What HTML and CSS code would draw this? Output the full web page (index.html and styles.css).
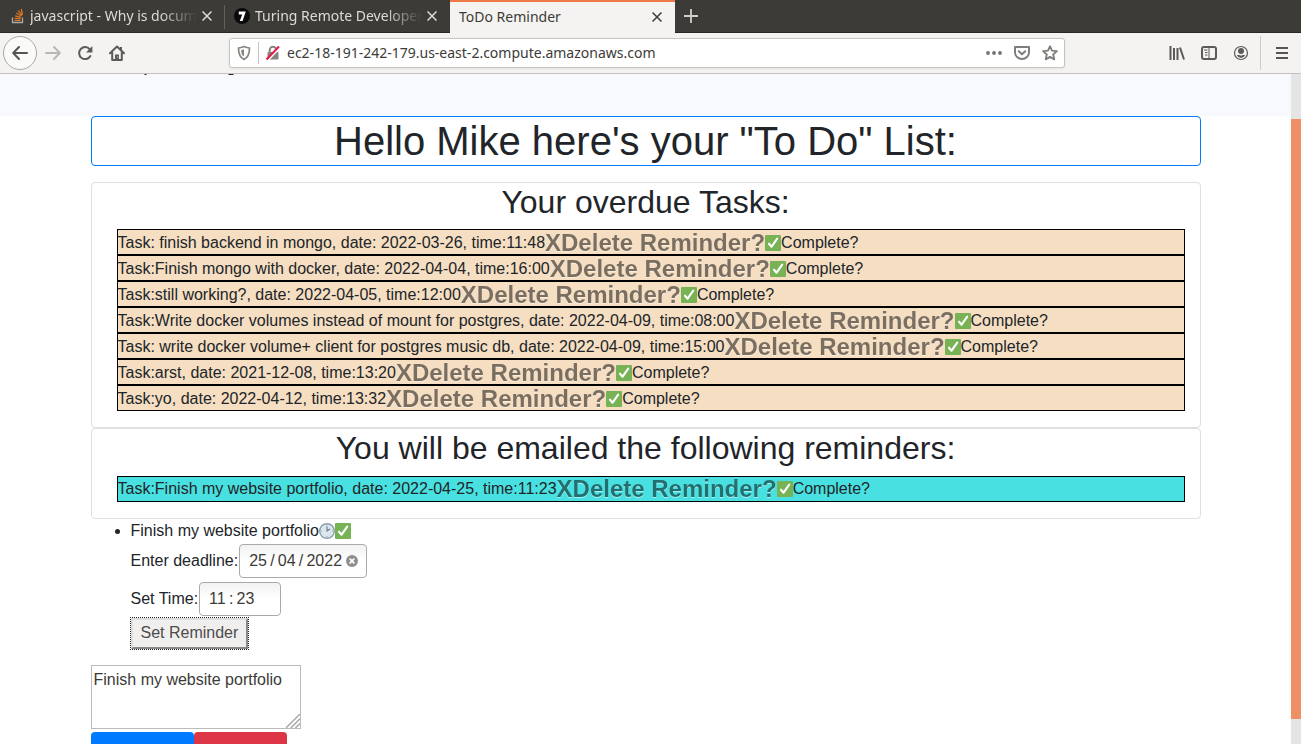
FILE: index.html
```html
<!DOCTYPE html>
<html lang="en">
<head>
<meta charset="utf-8">
<title>ToDo Reminder</title>
<link rel="stylesheet" href="styles.css">
</head>
<body>
<svg class="sprite" aria-hidden="true">
  <symbol id="check" viewBox="0 0 16 16"><rect width="16" height="16" rx="1" fill="#77b255"/><path d="M4 8.700l2.600 3L12.200 3.600" fill="none" stroke="#fff" stroke-width="2.100" stroke-linecap="round" stroke-linejoin="round"/></symbol>
  <symbol id="close" viewBox="0 0 10 10"><path d="M.5.5l9 9M9.500.5l-9 9" fill="none" stroke="currentColor" stroke-width="1.500"/></symbol>
</svg>
<div class="browser">
  <div class="tabs">
    <div class="tab">
      <svg class="favicon" viewBox="0 0 16 16"><path d="M3.500 9.500v5h10v-5" fill="none" stroke="#a9aaa9" stroke-width="1.300"/><path d="M5.500 12.500h6M5.600 10.300l6 .6M6.100 7.800l5.700 1.600M7.300 5l5 3M9.400 2.600l3.600 4.700M12.200 1l1.400 5.500" stroke="#e87922" stroke-width="1.200"/></svg>
      <span class="title fade">javascript - Why is document</span>
      <button class="x" aria-label="Close tab"><svg width="10" height="10"><use href="#close"/></svg></button>
    </div>
    <div class="tab divided">
      <svg class="favicon" viewBox="0 0 16 16"><circle cx="8" cy="8" r="8" fill="#0b0b0b"/><path d="M4.800 3.400h7L8.600 13H5.800l2.400-6.500H4.800z" fill="#fff"/></svg>
      <span class="title fade">Turing Remote Developer</span>
      <button class="x" aria-label="Close tab"><svg width="10" height="10"><use href="#close"/></svg></button>
    </div>
    <div class="tab active">
      <span class="title">ToDo Reminder</span>
      <button class="x" aria-label="Close tab"><svg width="10" height="10"><use href="#close"/></svg></button>
    </div>
    <button class="new" aria-label="New tab"><svg width="14" height="14" viewBox="0 0 14 14"><path d="M7 0v14M0 7h14" stroke="#d3d0c8" stroke-width="1.800"/></svg></button>
  </div>
  <div class="toolbar">
    <button class="back" aria-label="Back"><svg width="16" height="16" viewBox="0 0 16 16"><path d="M15 8H1.500M7 2L1.200 8 7 14" fill="none" stroke="#555552" stroke-width="2" stroke-linecap="round" stroke-linejoin="round"/></svg></button>
    <button class="tool" aria-label="Forward"><svg width="16" height="16" viewBox="0 0 16 16"><path d="M1 8h13.500M9 2l5.800 6L9 14" fill="none" stroke="#b9b8b5" stroke-width="2" stroke-linecap="round" stroke-linejoin="round"/></svg></button>
    <button class="tool" aria-label="Reload"><svg width="16" height="16" viewBox="0 0 16 16"><path d="M12.800 4.300A6 6 0 1 0 13.400 11" fill="none" stroke="#5c5b58" stroke-width="2" stroke-linecap="round"/><path d="M15.400 1v6.500H9z" fill="#5c5b58"/></svg></button>
    <button class="tool" aria-label="Home"><svg width="16" height="16" viewBox="0 0 16 16"><path d="M1 8.300L8 1.500l7 6.800M3.200 7.500V15h9.600V7.500" fill="none" stroke="#5c5b58" stroke-width="2" stroke-linecap="round" stroke-linejoin="round"/><path d="M6 15V9.500h4V15zM11 2h2v4h-2z" fill="#5c5b58"/><circle cx="8.600" cy="12" r=".6" fill="#f4f3f1"/></svg></button>
    <div class="urlbar">
      <svg width="16" height="16" viewBox="0 0 16 16"><path d="M8 1.600C10 2.600 12 3 13.500 3c0 5.800-1 9.300-5.500 11.500C3.500 12.300 2.500 8.800 2.500 3 4 3 6 2.600 8 1.600z" fill="none" stroke="#85847f" stroke-width="1.700" stroke-linejoin="round"/><path d="M8 4.200v7.400C5.800 10.200 5.200 8 5.100 5 6.200 4.900 7.100 4.600 8 4.200z" fill="#85847f"/></svg>
      <span class="bar"></span>
      <svg width="16" height="16" viewBox="0 0 16 16"><path d="M4.700 7.500V5a3.300 3.300 0 0 1 6.600 0v2.500" fill="none" stroke="#85847f" stroke-width="2"/><rect x="2.500" y="7" width="11" height="7.500" rx="1" fill="#85847f"/><path d="M2.500 15.500L15 2.500" stroke="#fff" stroke-width="2"/><path d="M1.500 14.500L14 1.500" stroke="#e8174b" stroke-width="2"/></svg>
      <input class="url" type="text" aria-label="Address" value="ec2-18-191-242-179.us-east-2.compute.amazonaws.com">
      <button class="inner" aria-label="Page actions"><svg width="16" height="16" viewBox="0 0 16 16" fill="#73726f"><circle cx="2" cy="8" r="1.900"/><circle cx="8" cy="8" r="1.900"/><circle cx="14" cy="8" r="1.900"/></svg></button>
      <button class="inner" aria-label="Save to Pocket"><svg width="16" height="16" viewBox="0 0 16 16"><path d="M1 2h14v5.500a7 6.500 0 0 1-14 0zM4.800 6.300L8 9.300l3.200-3" fill="none" stroke="#7f7e7b" stroke-width="2" stroke-linecap="round" stroke-linejoin="round"/></svg></button>
      <button class="inner" aria-label="Bookmark"><svg width="16" height="16" viewBox="0 0 16 16"><path d="M8 1.200l2 4.500 4.900.5-3.700 3.300 1.100 4.900L8 11.900l-4.300 2.500 1.100-4.900L1.100 6.200 6 5.700z" fill="none" stroke="#7f7e7b" stroke-width="1.800" stroke-linejoin="round"/></svg></button>
    </div>
    <div class="right">
      <button class="inner" aria-label="Library"><svg width="16" height="16" viewBox="0 0 16 16"><path d="M1.500 1v14M5 3v12M8.500 3v12M11 2.500L15 14.500" fill="none" stroke="#5c5b58" stroke-width="2"/></svg></button>
      <button class="inner" aria-label="Sidebars"><svg width="16" height="16" viewBox="0 0 16 16"><rect x="1" y="2" width="14" height="12" rx="2" fill="none" stroke="#5c5b58" stroke-width="2"/><path d="M8 2v12M3 5h3.500M4 7.500h2.500M4 10h2.500" stroke="#5c5b58"/></svg></button>
      <button class="inner" aria-label="Account"><svg width="16" height="16" viewBox="0 0 16 16"><circle cx="8" cy="8" r="6.500" fill="none" stroke="#5c5b58" stroke-width="1.200"/><circle cx="8" cy="6" r="3" fill="#5c5b58"/><path d="M3.800 10h2.400q1.800 1 3.600 0h2.400q-1.400 3-4.200 3t-4.200-3z" fill="#5c5b58"/></svg></button>
      <span class="split"></span>
      <button class="inner" aria-label="Menu"><svg width="14" height="14" viewBox="0 0 14 14"><path d="M1 2h12M1 7h12M1 12h12" stroke="#555552" stroke-width="2"/></svg></button>
    </div>
  </div>
  <div class="view">
    <main>
      <header class="banner"><svg width="240" height="1" aria-hidden="true"><path d="M144.500.5h2M228.500.5h5" stroke="#212529"/></svg></header>
      <div class="container">
        <h1>Hello Mike here's your "To Do" List:</h1>
        <section class="card">
          <h2>Your overdue Tasks:</h2>
          <ul class="tasks">
            <li>Task: finish backend in mongo, date: 2022-03-26, time:11:48<button class="delete">XDelete Reminder?</button><button class="done"><svg class="emoji"><use href="#check"/></svg>Complete?</button></li>
            <li>Task:Finish mongo with docker, date: 2022-04-04, time:16:00<button class="delete">XDelete Reminder?</button><button class="done"><svg class="emoji"><use href="#check"/></svg>Complete?</button></li>
            <li>Task:still working?, date: 2022-04-05, time:12:00<button class="delete">XDelete Reminder?</button><button class="done"><svg class="emoji"><use href="#check"/></svg>Complete?</button></li>
            <li>Task:Write docker volumes instead of mount for postgres, date: 2022-04-09, time:08:00<button class="delete">XDelete Reminder?</button><button class="done"><svg class="emoji"><use href="#check"/></svg>Complete?</button></li>
            <li>Task: write docker volume+ client for postgres music db, date: 2022-04-09, time:15:00<button class="delete">XDelete Reminder?</button><button class="done"><svg class="emoji"><use href="#check"/></svg>Complete?</button></li>
            <li>Task:arst, date: 2021-12-08, time:13:20<button class="delete">XDelete Reminder?</button><button class="done"><svg class="emoji"><use href="#check"/></svg>Complete?</button></li>
            <li>Task:yo, date: 2022-04-12, time:13:32<button class="delete">XDelete Reminder?</button><button class="done"><svg class="emoji"><use href="#check"/></svg>Complete?</button></li>
          </ul>
        </section>
        <section class="card">
          <h2>You will be emailed the following reminders:</h2>
          <ul class="tasks upcoming">
            <li>Task:Finish my website portfolio, date: 2022-04-25, time:11:23<button class="delete">XDelete Reminder?</button><button class="done"><svg class="emoji"><use href="#check"/></svg>Complete?</button></li>
          </ul>
        </section>
        <ul class="todos">
          <li>
            <div class="todo">Finish my website portfolio<button class="done" aria-label="Remind"><svg class="emoji" viewBox="0 0 16 16"><circle cx="8" cy="8" r="7.300" fill="#dce6ee" stroke="#8c9dab" stroke-width="1.400"/><path d="M8 3.500V8l3-2" fill="none" stroke="#66757f" stroke-width="1.100"/><g fill="#66757f"><circle cx="8" cy="2.500" r=".4"/><circle cx="13.500" cy="8" r=".4"/><circle cx="8" cy="13.500" r=".4"/><circle cx="2.500" cy="8" r=".4"/></g></svg></button><button class="done" aria-label="Complete"><svg class="emoji"><use href="#check"/></svg></button></div>
            <form>
              <div class="field"><label for="date">Enter deadline:</label><span class="box date"><input id="date" type="text" value="25&#8201;/&#8201;04&#8201;/&#8201;2022"><button type="button" class="clear" aria-label="Clear"><svg width="12" height="12" viewBox="0 0 12 12"><circle cx="6" cy="6" r="6" fill="#8f8f8f"/><path d="M3.700 3.700l4.600 4.600M8.300 3.700L3.700 8.300" stroke="#fff" stroke-width="1.700"/></svg></button></span></div>
              <div class="field"><label for="time">Set Time:</label><span class="box time"><input id="time" type="text" value="11&#8201;:&#8201;23"></span></div>
              <button type="button" class="set">Set Reminder</button>
            </form>
          </li>
        </ul>
        <div class="editor">
          <span class="area"><textarea aria-label="Task">Finish my website portfolio</textarea><svg class="grip" viewBox="0 0 14 14"><path d="M0 14L14 0M4.700 14L14 4.700M9.400 14L14 9.400" stroke="#a5a5a5" stroke-width="1.400"/></svg></span>
          <div class="actions"><button class="primary" aria-label="Save"></button><button class="danger" aria-label="Cancel"></button></div>
        </div>
      </div>
    </main>
    <div class="scroll"><div class="thumb"></div></div>
  </div>
</div>
</body>
</html>
```
FILE: styles.css
```css
* { box-sizing: border-box; }
body { margin: 0; font: 16px/24px "Liberation Sans", Arial, sans-serif; color: #212529; background: #fff; }
button { font: inherit; color: inherit; background: none; border: 0; padding: 0; }
h1, h2, ul { margin: 0; padding: 0; }
.sprite { display: none; }
.browser { display: flex; flex-direction: column; height: 100vh; overflow: hidden; }

.tabs { display: flex; flex: none; height: 33px; background: #3c3b37; color: #dfdbd2; border-bottom: 1px solid #282724; font: 14px/20px "Noto Sans", sans-serif; }
.tab { display: flex; align-items: center; width: 225px; padding: 0 13px 0 9px; gap: 5px; }
.tab.divided { position: relative; }
.tab.divided::before { content: ""; position: absolute; left: -1px; top: 5px; bottom: 3px; width: 1px; background: #62615c; }
.tab.active { height: 33px; background: #f4f3f1; color: #3c3b37; box-shadow: inset 0 2px #f07746; }
.favicon { width: 16px; height: 16px; flex: none; }
.title { flex: 1; overflow: hidden; white-space: nowrap; }
.fade { mask-image: linear-gradient(to right, #000 78%, transparent); }
.x { display: flex; flex: none; }
.new { display: flex; align-items: center; padding: 0 9px; }

.toolbar { display: flex; flex: none; align-items: center; height: 41px; padding: 0 12px 0 3px; background: #f4f3f1; border-bottom: 1px solid #c3c0bd; }
.back { display: grid; place-items: center; width: 34px; height: 34px; border: 1px solid #a9a8a4; border-radius: 50%; background: #fafaf9; }
.tool { display: grid; place-items: center; width: 32px; height: 32px; }
.urlbar { display: flex; align-items: center; flex: 1; height: 30px; margin-left: 96px; padding: 0 6px; gap: 6px; background: #fff; border: 1px solid #c7c3bf; border-radius: 3px; box-shadow: 0 1px 3px #00000012; }
.bar { width: 1px; height: 22px; background: #c7c3bf; }
.url { flex: 1; min-width: 0; border: 0; padding: 0; font: 14px/20px "Noto Sans", sans-serif; color: #3c3b37; background: none; outline: 0; }
.inner { display: flex; }
.urlbar .inner { margin-left: 6px; }
.right { display: flex; align-items: center; gap: 16px; margin-left: 104px; }
.split { width: 1px; height: 34px; margin: 0 -2px 0 -5px; background: #cfccc8; }

.view { display: flex; flex: 1; min-height: 0; }
main { flex: 1; min-width: 0; overflow: hidden; }
.scroll { width: 10px; padding-top: 45px; background: #e5e5e5; }
.thumb { height: 96%; max-height: 600px; background: #f08e66; }
.banner { height: 42px; background: #f8f9fc; }
.banner svg { display: block; }
.container { max-width: 1140px; margin: 0 auto; padding: 0 15px; }
h1 { margin-bottom: 16px; font-size: 40px; line-height: 48px; font-weight: 400; text-align: center; border: 1px solid #007bff; border-radius: 4px; }
.card { padding-bottom: 16px; border: 1px solid #dfdfdf; border-radius: 4px; }
h2 { margin-bottom: 8px; font-size: 32px; line-height: 1.2; font-weight: 400; text-align: center; }
.tasks { margin: 0 15px 0 25px; list-style: none; }
.tasks li { display: flex; align-items: center; height: 26px; padding-top: 1px; border: 1px solid #000; background: #f5dec1; white-space: nowrap; }
.tasks.upcoming li { background: #48e0e0; }
.delete { font-size: 24px; font-weight: 700; color: #000; text-shadow: 0 1px 0 #fff; opacity: .5; }
.done { display: inline-flex; align-items: center; }
.emoji { width: 16px; height: 16px; }

.todos { padding-left: 40px; }
.todo { display: flex; align-items: center; margin-bottom: 1px; }
.field { display: flex; align-items: center; height: 34px; margin-bottom: 4px; gap: 1px; }
.box { display: flex; align-items: center; height: 34px; padding: 0 8px 0 9px; border: 1px solid #aaa; border-radius: 4px; background: linear-gradient(#f2f2f2, #fff 50%); }
.box input { flex: 1; min-width: 0; border: 0; padding: 0; font: inherit; color: #3c3b37; background: none; outline: 0; }
.date { width: 128px; }
.time { width: 82px; }
.clear { display: flex; }
.set { display: block; height: 31px; margin-top: -2px; padding: 0 8px; color: #4c4c4c; background: #f0efed; border: 2px outset #ddd; outline: 1px dotted #222; outline-offset: 0; }
.editor { margin-top: 16px; }
.area { position: relative; display: block; width: 210px; height: 64px; margin-bottom: 3px; }
textarea { width: 100%; height: 100%; padding: 2px; font: inherit; color: #3c3b37; border: 1px solid #bbb; resize: none; outline: 0; }
.grip { position: absolute; right: 1px; bottom: 1px; width: 14px; height: 14px; }
.actions { display: flex; }
.actions button { height: 38px; border-radius: 4px; }
.primary { width: 103px; background: #007bff; }
.danger { width: 93px; background: #dc3545; }
```
